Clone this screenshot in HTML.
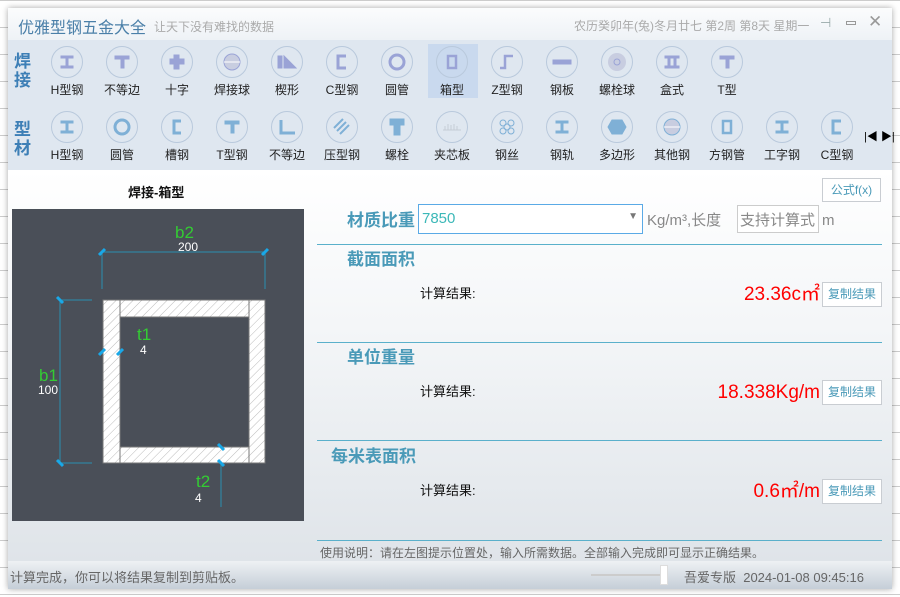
<!DOCTYPE html>
<html><head><meta charset="utf-8"><style>
*{margin:0;padding:0;box-sizing:border-box}
body{width:900px;height:597px;overflow:hidden;background:#fff;position:relative;font-family:"Liberation Sans","Noto Sans CJK SC",sans-serif;}
.grid{position:absolute;inset:0;background-image:linear-gradient(#ccc 1px,transparent 1px);background-size:100% 27px;}
.win{position:absolute;left:8px;top:8px;width:884px;height:581px;background:#fff;box-shadow:0 0 6px rgba(0,0,0,.35);overflow:hidden}
.title{position:absolute;left:0;top:0;width:100%;height:32px;background:linear-gradient(#fbfcfd,#eef2f6);}
.tb{position:absolute;left:0;top:32px;width:100%;height:130px;background:#dfe7f0}
.a{position:absolute;white-space:nowrap}
.it{position:absolute;width:50px;text-align:center;font-size:12px;color:#222;line-height:14px}
.it .c{width:32px;height:32px;border:1px solid #b9c9dc;border-radius:50%;margin:6px auto 5px;display:flex;align-items:center;justify-content:center}
.side{position:absolute;left:6px;width:20px;font-size:17px;font-weight:bold;color:#3d7fb6;line-height:19px}
.content{position:absolute;left:0;top:162px;width:100%;height:391px;background:linear-gradient(#fff,#f4f6f8 40%,#dfe4e9)}
.hl{position:absolute;left:309px;width:565px;height:1px;background:#5ab0cb}
.h{position:absolute;font-size:17px;font-weight:bold;color:#4a9ab8;line-height:20px}
.lab{position:absolute;left:412px;font-size:13px;color:#111;line-height:16px}
.res{position:absolute;right:72px;font-size:19px;color:#f00;line-height:22px}
.btn{position:absolute;left:814px;width:60px;height:25px;border:1px solid #c9cdd2;background:#fff;font-size:12px;color:#4a9ab8;text-align:center;line-height:23px}
.status{position:absolute;left:0;top:553px;width:100%;height:28px;background:linear-gradient(#eef1f4,#c5ced8);font-size:13px;color:#666}
</style></head><body>
<div class="grid"></div>
<div class="win">
<div class="title">
<div class="a" style="left:10px;top:6px;font-size:16px;color:#4a7fa8">优雅型钢五金大全</div>
<div class="a" style="left:146px;top:10px;font-size:12px;color:#aaa">让天下没有难找的数据</div>
<div class="a" style="left:566px;top:9px;font-size:12px;color:#aaa">农历癸卯年(兔)冬月廿七 第2周 第8天 星期一</div>
<div class="a" style="left:812px;top:7px;font-size:13px;color:#9aa">⊣</div>
<div class="a" style="left:838px;top:13px;width:10px;height:4px;border:1px solid #999"></div>
<div class="a" style="left:860px;top:4px;font-size:17px;color:#999">✕</div>
</div>
<div class="tb">
<div class="side" style="top:12px">焊<br>接</div>
<div class="side" style="top:80px">型<br>材</div>
<div class="a" style="left:420px;top:4px;width:50px;height:54px;background:#c9d9ee"></div>
</div>
<div id="items"></div>
<div class="content">
<div class="a" style="left:120px;top:12px;font-size:13px;font-weight:bold;color:#111">焊接-箱型</div>
<svg class="a" style="left:4px;top:39px" width="292" height="312">
<defs><pattern id="p" width="6" height="6" patternUnits="userSpaceOnUse" patternTransform="rotate(45)"><rect width="6" height="6" fill="#fff"/><line x1="0" y1="0" x2="0" y2="6" stroke="#bbb" stroke-width="1"/></pattern></defs>
<rect width="292" height="312" fill="#4a4f58"/>
<g stroke="#2a8fb0" stroke-width="1" fill="none">
<line x1="90" y1="43" x2="253" y2="43"/><line x1="90" y1="43" x2="90" y2="80"/><line x1="253" y1="43" x2="253" y2="80"/>
<line x1="48" y1="91" x2="48" y2="254"/><line x1="48" y1="91" x2="80" y2="91"/><line x1="48" y1="254" x2="80" y2="254"/>
<line x1="90" y1="143" x2="150" y2="143"/><line x1="209" y1="238" x2="209" y2="298"/>
</g>
<rect x="91" y="91" width="162" height="163" fill="url(#p)" stroke="#777"/>
<rect x="108" y="108" width="129" height="130" fill="#4a4f58" stroke="#777"/>
<line x1="108" y1="91" x2="108" y2="254" stroke="#777"/><line x1="237" y1="91" x2="237" y2="254" stroke="#777"/>
<g stroke="#19a8e8" stroke-width="3"><line x1="87" y1="46" x2="93" y2="40"/><line x1="250" y1="46" x2="256" y2="40"/><line x1="45" y1="88" x2="51" y2="94"/><line x1="45" y1="251" x2="51" y2="257"/><line x1="87" y1="146" x2="93" y2="140"/><line x1="105" y1="146" x2="111" y2="140"/><line x1="206" y1="235" x2="212" y2="241"/><line x1="206" y1="251" x2="212" y2="257"/></g>
<g font-family="Liberation Sans" font-size="17" fill="#3c3"><text x="163" y="29">b2</text><text x="27" y="172">b1</text><text x="125" y="131">t1</text><text x="184" y="278">t2</text></g>
<g font-family="Liberation Sans" font-size="12" fill="#fff"><text x="166" y="42">200</text><text x="26" y="185">100</text><text x="128" y="145">4</text><text x="183" y="293">4</text></g>
</svg>
<div class="btn" style="top:8px;left:814px;width:59px;height:24px">公式f(x)</div>
<div class="h" style="left:339px;top:41px">材质比重</div>
<div class="a" style="left:410px;top:34px;width:225px;height:30px;border:1px solid #5aaae6;background:#fff;font-size:15px;color:#3cb8b8;padding:5px 3px">7850<span style="position:absolute;right:4px;top:6px;color:#777;font-size:10px">▼</span></div>
<div class="a" style="left:639px;top:42px;font-size:15px;color:#888;line-height:18px">Kg/m³,长度</div>
<div class="a" style="left:729px;top:35px;width:82px;height:28px;border:1px solid #ccc;background:#fff;font-size:15px;color:#888;padding:3px 2px">支持计算式</div>
<div class="a" style="left:814px;top:42px;font-size:15px;color:#888;line-height:18px">m</div>
<div class="hl" style="top:74px"></div>
<div class="h" style="left:339px;top:80px">截面面积</div>
<div class="lab" style="top:116px">计算结果:</div>
<div class="res" style="top:114px">23.36c㎡</div>
<div class="btn" style="top:112px">复制结果</div>
<div class="hl" style="top:172px"></div>
<div class="h" style="left:339px;top:178px">单位重量</div>
<div class="lab" style="top:214px">计算结果:</div>
<div class="res" style="top:212px">18.338Kg/m</div>
<div class="btn" style="top:210px">复制结果</div>
<div class="hl" style="top:270px"></div>
<div class="h" style="left:323px;top:277px">每米表面积</div>
<div class="lab" style="top:313px">计算结果:</div>
<div class="res" style="top:311px">0.6㎡/m</div>
<div class="btn" style="top:309px">复制结果</div>
<div class="hl" style="top:370px"></div>
<div class="a" style="left:312px;top:374px;font-size:12px;color:#666">使用说明：请在左图提示位置处，输入所需数据。全部输入完成即可显示正确结果。</div>
</div>
<div class="status">
<div class="a" style="left:2px;top:6px">计算完成，你可以将结果复制到剪贴板。</div>
<div class="a" style="left:583px;top:13px;width:75px;height:2px;background:#ccc"></div>
<div class="a" style="left:652px;top:4px;width:8px;height:20px;background:#fff;border:1px solid #ddd"></div>
<div class="a" style="left:676px;top:6px">吾爱专版&nbsp; 2024-01-08 09:45:16</div>
</div>
</div>
<div class="a" style="left:864px;top:128px;font-size:11px;color:#000">|◀ ▶|</div>
<script>
const r1=[["H型钢","I"],["不等边","T"],["十字","+"],["焊接球","o"],["楔形","w"],["C型钢","C"],["圆管","O"],["箱型","B"],["Z型钢","Z"],["钢板","-"],["螺栓球","@"],["盒式","II"],["T型","T"]];
const r2=[["H型钢","I"],["圆管","O"],["槽钢","["],["T型钢","T"],["不等边","L"],["压型钢","/"],["螺栓","b"],["夹芯板","~"],["钢丝","8"],["钢轨","I"],["多边形","h"],["其他钢","o"],["方钢管","B"],["工字钢","I"],["C型钢","C"]];
function ic(t,c){const s='<svg width="22" height="22" viewBox="0 0 22 22" fill="'+c+'" stroke="'+c+'">';let b='';
switch(t){case"I":b='<rect x="5" y="5" width="12" height="2"/><rect x="10" y="5" width="2" height="12"/><rect x="5" y="15" width="12" height="2"/>';break;
case"T":b='<rect x="4" y="5" width="14" height="3"/><rect x="10" y="5" width="3" height="12"/>';break;
case"+":b='<rect x="4" y="8" width="14" height="5"/><rect x="8" y="4" width="5" height="14"/>';break;
case"o":b='<circle cx="11" cy="11" r="8" fill="#c8cde0"/><line x1="3" y1="11" x2="19" y2="11" stroke="#fff"/>';break;
case"w":b='<rect x="2" y="5" width="4" height="12"/><polygon points="8,17 20,17 8,5"/>';break;
case"C":b='<path d="M15 5H7V17H15" fill="none" stroke-width="3"/>';break;
case"O":b='<circle cx="11" cy="11" r="7" fill="none" stroke-width="3"/>';break;
case"B":b='<rect x="7" y="5" width="8" height="12" fill="none" stroke-width="2.5"/>';break;
case"Z":b='<path d="M4 17H9V5H17" fill="none" stroke-width="2.5"/>';break;
case"-":b='<rect x="2" y="9" width="18" height="4"/>';break;
case"@":b='<circle cx="11" cy="11" r="9" fill="#c8cde0" stroke="none"/><circle cx="11" cy="11" r="3" fill="none"/>';break;
case"II":b='<rect x="4" y="5" width="14" height="2"/><rect x="7" y="5" width="2" height="12"/><rect x="13" y="5" width="2" height="12"/><rect x="4" y="15" width="14" height="2"/>';break;
case"[":b='<path d="M15 5H8V17H15" fill="none" stroke-width="3"/>';break;
case"L":b='<path d="M5 4V17H19" fill="none" stroke-width="3"/>';break;
case"/":b='<g stroke-width="2"><line x1="3" y1="12" x2="12" y2="3"/><line x1="6" y1="15" x2="15" y2="6"/><line x1="9" y1="18" x2="18" y2="9"/></g>';break;
case"b":b='<rect x="4" y="3" width="14" height="6"/><rect x="8" y="9" width="6" height="10"/>';break;
case"~":b='<path d="M2 14H20M4 14V10M7 14V8M10 14V9M13 14V8M16 14V10" fill="none" stroke-width="1"/>';break;
case"8":b='<g fill="none" stroke-width="1"><circle cx="7" cy="7" r="3"/><circle cx="15" cy="7" r="3"/><circle cx="11" cy="11" r="3"/><circle cx="7" cy="15" r="3"/><circle cx="15" cy="15" r="3"/></g>';break;
case"h":b='<polygon points="6,4 16,4 20,11 16,18 6,18 2,11"/>';break;}
return s+b+'</svg>';}
let h='';
r1.forEach((a,i)=>{h+='<div class="it" style="left:'+(67+i*55-33)+'px;top:32px"><div class="c">'+ic(a[1],"#9aa3d6")+'</div>'+a[0]+'</div>'});
r2.forEach((a,i)=>{h+='<div class="it" style="left:'+(67+i*55-33)+'px;top:97px"><div class="c">'+ic(a[1],a[1]=="~"?"#c6ccd6":"#7fb0d6")+'</div>'+a[0]+'</div>'});
document.getElementById('items').innerHTML=h;
</script>
</body></html>
